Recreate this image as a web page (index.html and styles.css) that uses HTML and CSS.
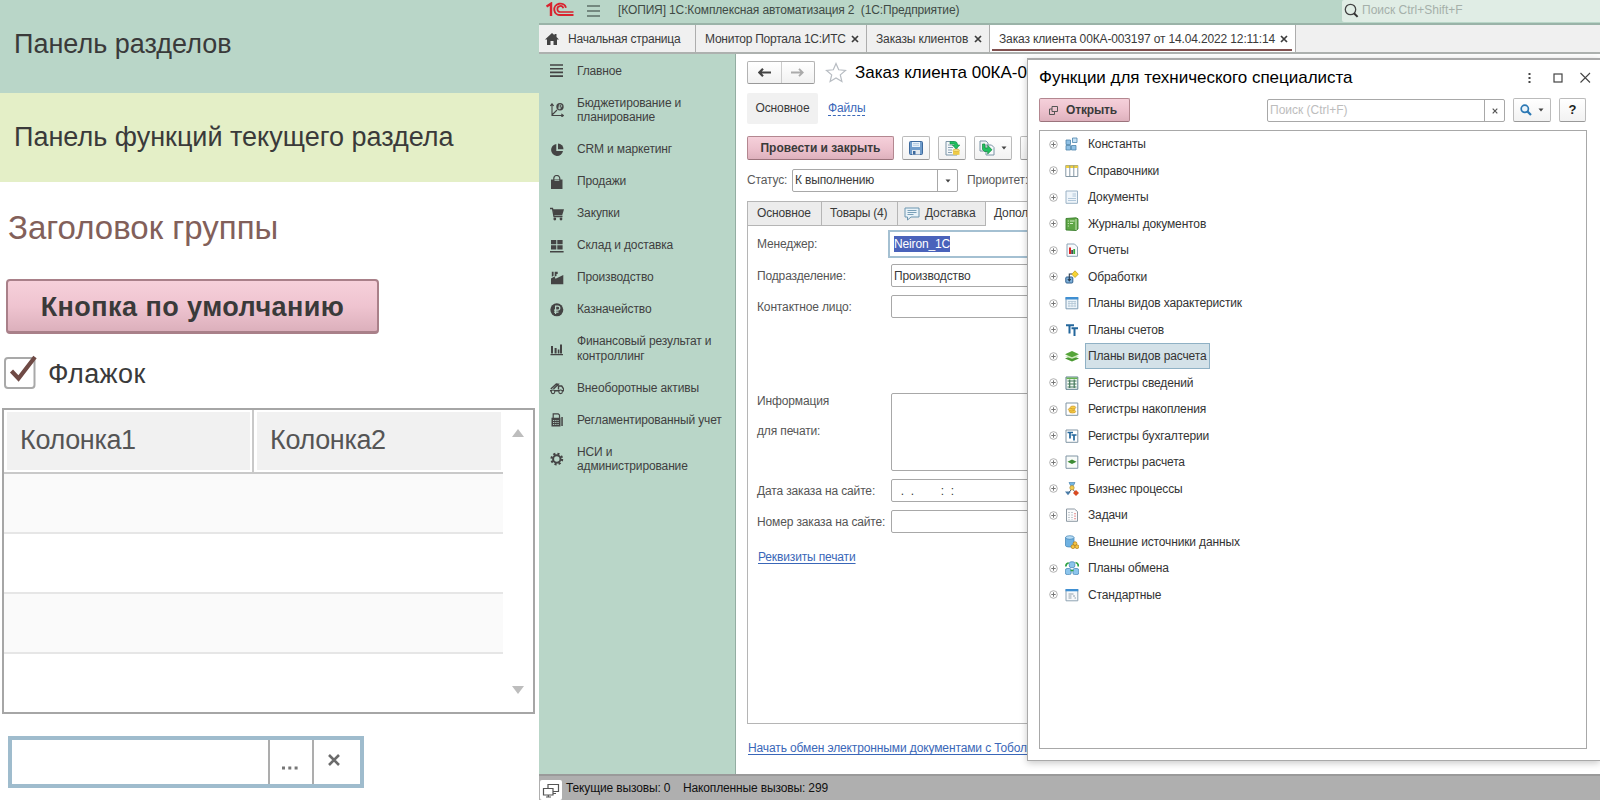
FILE: index.html
```html
<!DOCTYPE html>
<html lang="ru">
<head>
<meta charset="utf-8">
<title>1С:Комплексная автоматизация 2</title>
<link rel="stylesheet" href="styles.css">
</head>
<body>
<svg class="defs" width="0" height="0">
  <symbol id="plus" viewBox="0 0 9 9"><circle cx="4.5" cy="4.5" r="3.8" fill="#fff" stroke="#a9a9a9" stroke-width=".9"/><path d="M2.300 4.500h4.400M4.500 2.300v4.400" stroke="#777" stroke-width="1"/></symbol>
  <symbol id="cross" viewBox="0 0 8 8"><path d="M1 1l6 6M7 1l-6 6" stroke="#3c3c3c" stroke-width="1.7" fill="none"/></symbol>
  <symbol id="caret" viewBox="0 0 6 4"><path d="M.5.5h5L3 3.5z" fill="#444"/></symbol>
</svg>

<section class="samples">
  <div class="sample-sections"><span>Панель разделов</span></div>
  <div class="sample-functions"><span>Панель функций текущего раздела</span></div>
  <h2 class="sample-heading">Заголовок группы</h2>
  <button class="sample-button"><span>Кнопка по умолчанию</span></button>
  <label class="sample-check">
    <svg width="34" height="36" viewBox="0 0 34 36"><rect x="1" y="4" width="29.5" height="30" rx="3" fill="#fff" stroke="#a9a9a9" stroke-width="2"/><path d="M7.5 17l7 7.5L31 3" fill="none" stroke="#6f4a45" stroke-width="4.2"/></svg>
    <span>Флажок</span>
  </label>
  <div class="sample-table">
    <div class="st-grid">
      <div class="st-head"><div class="st-col st-first"><span>Колонка1</span></div><div class="st-col"><span>Колонка2</span></div></div>
      <div class="st-row odd"></div><div class="st-row"></div><div class="st-row odd"></div>
    </div>
    <div class="st-scroll"><i class="up"></i><i class="down"></i></div>
  </div>
  <div class="sample-input">
    <div class="si-text"></div>
    <div class="si-btn si-dots"><svg width="16" height="4" viewBox="0 0 16 4"><path d="M0 .5h3v3H0zM6.3.5h3v3h-3zM12.600.5h3v3h-3z" fill="#777"/></svg></div>
    <div class="si-btn si-clear"><svg width="12" height="12" viewBox="0 0 12 12"><path d="M1 1l10 10M11 1L1 11" stroke="#6b6b6b" stroke-width="2.6"/></svg></div>
  </div>
</section>

<section class="app">
  <header class="topbar">
    <svg class="logo" width="28" height="15" viewBox="0 0 28 15"><g fill="none" stroke="#d9232e"><path d="M.5 4.600L5 1.700V14" stroke-width="2.400"/><path d="M20 5.700A6 5.700 0 1 0 14.500 13H27.500" stroke-width="1.900"/><path d="M17.300 6.300A3 3 0 1 0 14.500 10H27.500" stroke-width="1.700"/></g></svg>
    <svg class="burger" width="13" height="12" viewBox="0 0 13 12"><path d="M0 1h13M0 6h13M0 11h13" stroke="#5d6f67" stroke-width="1.300"/></svg>
    <span class="app-title">[КОПИЯ] 1С:Комплексная автоматизация 2&nbsp; (1С:Предприятие)</span>
    <div class="search-all">
      <svg width="15" height="15" viewBox="0 0 15 15"><circle cx="6.500" cy="6.500" r="5.200" fill="none" stroke="#444" stroke-width="1.300"/><path d="M10 10.300l3.600 3.600" stroke="#333" stroke-width="2"/></svg>
      <span>Поиск Ctrl+Shift+F</span>
    </div>
  </header>

  <nav class="tabs">
    <div class="tab home"><svg width="14" height="12" viewBox="0 0 14 12"><path d="M7 0L0 6.500h2V12h3.500V8h3v4H12V6.500h2L11.500 4V1h-2v1.300z" fill="#444"/></svg><span>Начальная страница</span></div>
    <div class="tab t2"><span>Монитор Портала 1С:ИТС</span><svg width="8" height="8"><use href="#cross"/></svg></div>
    <div class="tab t3"><span>Заказы клиентов</span><svg width="8" height="8"><use href="#cross"/></svg></div>
    <div class="tab t4 active"><span>Заказ клиента 00КА-003197 от 14.04.2022 12:11:14</span><svg width="8" height="8"><use href="#cross"/></svg></div>
  </nav>

  <div class="middle">
    <ul class="sidebar">
      <li><svg viewBox="0 0 14 14"><path d="M0 1h13M0 4.700h13M0 8.400h13M0 12.100h13" stroke="#444" stroke-width="1.600"/></svg><span>Главное</span></li>
      <li><svg viewBox="0 0 14 14"><g stroke="#444" fill="none"><path d="M2 1v11.500h11M.3 3L2 .8 3.700 3M11.300 10.800l2 1.700-2 1.700M2 12l5-5" stroke-width="1.100"/></g><circle cx="10" cy="3.800" r="3.700" fill="#444"/><path d="M9.300 6.300V1.800h1.300a1.100 1.100 0 0 1 0 2.400H8.300M8.300 5.400h2.500" stroke="#b9d6c8" stroke-width=".8" fill="none"/></svg><span>Бюджетирование и<br>планирование</span></li>
      <li><svg viewBox="0 0 14 14"><path d="M6.300 1A6 6 0 1 0 13 8H6.300z" fill="#444"/><path d="M8 .5v5.800h5.500A5.800 5.800 0 0 0 8 .5z" fill="#444"/></svg><span>CRM и маркетинг</span></li>
      <li><svg viewBox="0 0 14 14"><path d="M1 4.500h11.500V14H1z" fill="#444"/><path d="M3.800 7V3.500a3 3 0 0 1 6 0V7" fill="none" stroke="#444" stroke-width="1.200"/><path d="M4.500 5.500h4.800" stroke="#b9d6c8" stroke-width=".7"/></svg><span>Продажи</span></li>
      <li><svg viewBox="0 0 14 14"><path d="M0 1.500h2.500l1.500 8h8.500" fill="none" stroke="#444" stroke-width="1.300"/><path d="M2.800 2.300H14l-1.800 6H4z" fill="#444"/><circle cx="4.800" cy="12" r="1.400" fill="#444"/><circle cx="11" cy="12" r="1.400" fill="#444"/></svg><span>Закупки</span></li>
      <li><svg viewBox="0 0 14 14"><path d="M1 1h5.300v4.300H1zM7.300 1h5.300v4.300H7.300zM1 6.300h5.300v4.300H1zM7.300 6.300h5.300v4.300H7.300zM0 12h13.600v1.600H0z" fill="#444"/></svg><span>Склад и доставка</span></li>
      <li><svg viewBox="0 0 14 14"><path d="M1 13.300V7.500l3.500-2 1 2.300L13.300 4v9.300zM1.800.8h1.800v4l-1.800 1zM4.700.8h3v2.200H6.500v2l-1.800.5z" fill="#444"/></svg><span>Производство</span></li>
      <li><svg viewBox="0 0 14 14"><circle cx="6.800" cy="6.800" r="6.500" fill="#444"/><path d="M5.600 11V3.200h2.200a1.900 1.900 0 0 1 0 4H4M4 9.100h4.500" stroke="#b9d6c8" stroke-width="1.200" fill="none"/></svg><span>Казначейство</span></li>
      <li><svg viewBox="0 0 14 14"><path d="M1 4h2v7.500H1zM4.600 6h2v5.500h-2zM7.800 7.500h1.600v4H7.800zM10 2.500h2v9h-2zM.5 12h12.500v1.300H.5z" fill="#444"/></svg><span>Финансовый результат и<br>контроллинг</span></li>
      <li><svg viewBox="0 0 14 14"><path d="M.8 8l5.500-5 2 .3L3.500 8M8.500 8.500V5h3.200l2 3v2.500M0 9.800h14" stroke="#444" stroke-width="1.400" fill="none"/><circle cx="3" cy="10.800" r="1.800" fill="#b9d6c8" stroke="#444" stroke-width="1.100"/><circle cx="10.600" cy="10.800" r="1.800" fill="#b9d6c8" stroke="#444" stroke-width="1.100"/></svg><span>Внеоборотные активы</span></li>
      <li><svg viewBox="0 0 14 14"><path d="M3.200 5V.8h5L9.500 2v3" fill="none" stroke="#444" stroke-width="1.200"/><path d="M1.500 4.800h9V13.500h-9zM11.300 4h1.500v9h-1.500z" fill="#444"/><path d="M3 7.500h6M3 9.500h6M3 11.500h6" stroke="#b9d6c8" stroke-width=".9" stroke-dasharray="1.300 .9"/></svg><span>Регламентированный учет</span></li>
      <li><svg viewBox="0 0 14 14"><circle cx="6.800" cy="7" r="5.300" fill="none" stroke="#444" stroke-width="2.200" stroke-dasharray="2.100 2.060"/><circle cx="6.800" cy="7" r="3.700" fill="none" stroke="#444" stroke-width="2"/></svg><span>НСИ и<br>администрирование</span></li>
    </ul>

    <main class="document">
      <div class="doc-head">
        <div class="navpair"><div><svg width="13" height="9" viewBox="0 0 13 9"><path d="M13 4.500H2M5 .8L1.300 4.500 5 8.200" fill="none" stroke="#444" stroke-width="2.200"/></svg></div><div><svg width="13" height="9" viewBox="0 0 13 9"><path d="M0 4.500h11M8 .8l3.700 3.700L8 8.200" fill="none" stroke="#aaa" stroke-width="1.800"/></svg></div></div>
        <svg class="star" width="22" height="21" viewBox="0 0 22 21"><path d="M11 1.500l2.700 6.300 6.800.6-5.200 4.500 1.600 6.600-5.900-3.500-5.900 3.500 1.600-6.600L1.500 8.400l6.800-.6z" fill="#fff" stroke="#b7bcc2" stroke-width="1.200"/></svg>
        <h1>Заказ клиента 00КА-0</h1>
      </div>
      <div class="doc-nav"><span class="current">Основное</span><a>Файлы</a></div>
      <div class="doc-tools">
        <button class="primary post">Провести и закрыть</button>
        <button class="tool b1"><svg width="14" height="14" viewBox="0 0 14 14"><rect x=".5" y=".5" width="13" height="13" rx="1" fill="#6f9ccb" stroke="#3d699c"/><path d="M3 1h8v5H3z" fill="#e9f2fa"/><path d="M4 2.500h6M4 4.300h6" stroke="#a9c3dc" stroke-width=".8"/><path d="M3 9h8v4.500H3z" fill="#e4e9ee"/><path d="M4 10h2.500v3.500H4z" fill="#3d699c"/></svg></button>
        <button class="tool b1"><svg width="15" height="16" viewBox="0 0 15 16"><path d="M1 1.500h8l3 3V15H1z" fill="#f4f7f9" stroke="#7b94a6"/><path d="M3 5h5M3 7.500h5M3 10h4M3 12.500h4" stroke="#8aa2b4"/><path d="M5 1.500h5q2.500.3 2.500 3.500h2.300L11 9 7.400 5h2.300V4H5z" fill="#20c060" stroke="#0e8a3e" stroke-width=".6"/><path d="M8 10.300h6.500v4.500H8z" fill="#efcb45"/><ellipse cx="11.200" cy="10.300" rx="3.200" ry="1.200" fill="#fbe684" stroke="#c39b26" stroke-width=".5"/></svg></button>
        <button class="tool b2"><svg width="16" height="16" viewBox="0 0 16 16"><path d="M1 1h6l2 2v8H1z" fill="#f1f4f6" stroke="#7b94a6"/><path d="M7 5h5.500L15 7.500V15H7z" fill="#f7f9fa" stroke="#7b94a6"/><path d="M3.500 4h2.500v4h2.700V5.300L13 9.800 8.700 14v-2.500H5.500L3.500 9.500z" fill="#20c060" stroke="#0e8a3e" stroke-width=".7"/></svg><svg width="6" height="4"><use href="#caret"/></svg></button>
        <button class="tool b1"></button>
      </div>
      <div class="doc-status">
        <span class="lbl">Статус:</span>
        <div class="combo"><span>К выполнению</span><i><svg width="6" height="4"><use href="#caret"/></svg></i></div>
        <span class="lbl prio">Приоритет:</span>
      </div>
      <div class="doc-tabs">
        <div class="dt w1">Основное</div><div class="dt w2">Товары (4)</div><div class="dt w3"><svg width="16" height="14" viewBox="0 0 16 14"><path d="M1 1h14v9H7l-3.500 3V10H1z" fill="#e8f2f8" stroke="#6d96b0"/><path d="M3.500 3.500h9M3.500 5.500h9M3.500 7.500h6" stroke="#6d96b0" stroke-width=".9"/></svg>Доставка</div><div class="dt on">Допол</div>
      </div>
      <div class="doc-form">
        <div class="row r1"><span>Менеджер:</span><div class="field focus"><mark>Neiron_1C</mark></div></div>
        <div class="row r2"><span>Подразделение:</span><div class="field">Производство</div></div>
        <div class="row r3"><span>Контактное лицо:</span><div class="field"></div></div>
        <div class="row r4"><span>Информация<br>для печати:</span><div class="field area"></div></div>
        <div class="row r5"><span>Дата заказа на сайте:</span><div class="field mask">&nbsp; .&nbsp; .&nbsp; &nbsp; &nbsp; &nbsp; :&nbsp; :</div></div>
        <div class="row r6"><span>Номер заказа на сайте:</span><div class="field"></div></div>
        <a class="props">Реквизиты печати</a>
      </div>
      <a class="edi">Начать обмен электронными документами с Тобол</a>
    </main>
  </div>

  <footer class="status">
    <div class="st-icon"><svg width="18" height="16" viewBox="0 0 18 16"><g fill="#fff" stroke="#555" stroke-width="1.200"><path d="M6 1.500h10.500v7H6zM10 10.500h4"/><path d="M1.500 5.500h9.500v6.500H1.500zM4 14h5M6.300 12v2"/></g></svg></div>
    <span class="s1">Текущие вызовы: 0</span><span class="s2">Накопленные вызовы: 299</span>
  </footer>

  <aside class="dialog">
    <div class="dlg-head">
      <h1>Функции для технического специалиста</h1>
      <svg width="64" height="12" viewBox="0 0 64 12"><path d="M1.500 1h2v2h-2zM1.500 5h2v2h-2zM1.500 9h2v2h-2z" fill="#444"/><rect x="27" y="2" width="8" height="8" fill="none" stroke="#444" stroke-width="1.200"/><path d="M53.500 1l9.500 9.500M63 1l-9.500 9.500" stroke="#444" stroke-width="1.100"/></svg>
    </div>
    <div class="dlg-tools">
      <button class="primary open"><svg width="9" height="9" viewBox="0 0 9 9"><path d="M3 .5h5.500v5H3zM3 3H.5v5.500h5V5.500" fill="none" stroke="#555" stroke-width="1"/></svg>Открыть</button>
      <div class="find"><span>Поиск (Ctrl+F)</span><i><svg width="6" height="6" viewBox="0 0 6 6"><path d="M.7.7l4.600 4.600M5.300.7L.7 5.300" stroke="#555" stroke-width="1.200"/></svg></i></div>
      <button class="tool lens"><svg width="12" height="12" viewBox="0 0 12 12"><circle cx="4.800" cy="4.800" r="3.600" fill="#eaf4fb" stroke="#2b78b4" stroke-width="1.700"/><path d="M7.400 7.400l3.600 3.600" stroke="#2b78b4" stroke-width="2.200"/></svg><svg width="6" height="4"><use href="#caret"/></svg></button>
      <button class="tool help">?</button>
    </div>
    <ul class="tree">
      <li><svg class="pl"><use href="#plus"/></svg><svg class="ic" viewBox="0 0 14 14"><g fill="#8fc0e4" stroke="#4d84ab" stroke-width=".8"><path d="M1 3h4.500v4.500H1zM1 8.500h4.500V13H1zM6.500 8.500H11V13H6.500z"/><path d="M7.500 1H12v4.500H7.500z" fill="#c6e2f5"/></g></svg><span>Константы</span></li>
      <li><svg class="pl"><use href="#plus"/></svg><svg class="ic" viewBox="0 0 14 14"><path d="M.8 1.500h12v11H.8z" fill="#fff" stroke="#8597a4"/><path d="M.8 1.500h12v2.500H.8z" fill="#f0cf3c"/><path d="M4.800 1.500v11M8.800 1.500v11" stroke="#8597a4"/></svg><span>Справочники</span></li>
      <li><svg class="pl"><use href="#plus"/></svg><svg class="ic" viewBox="0 0 14 14"><path d="M1 1h11.500v12.300H1z" fill="#eff5fa" stroke="#9bb2c5"/><path d="M7.500 4H11M7.500 6H11M3 8.500h8M3 10.500h8" stroke="#a9c2d6" stroke-width=".9"/></svg><span>Документы</span></li>
      <li><svg class="pl"><use href="#plus"/></svg><svg class="ic" viewBox="0 0 14 14"><path d="M1 1.500L11 .8l2 1V12l-2 1.500L1 13z" fill="#5ea646" stroke="#3a7e2c" stroke-width=".9"/><path d="M11 2v11" stroke="#c9e6b9" stroke-width="1"/><path d="M5 4h4.500M5 6.500h3M2.800 4h1M2.800 6.500h1M2.800 9h1" stroke="#d6efc9"/></svg><span>Журналы документов</span></li>
      <li><svg class="pl"><use href="#plus"/></svg><svg class="ic" viewBox="0 0 14 14"><path d="M2 1h7.500l3 3v9.300H2z" fill="#f7fafc" stroke="#8ea4b5"/><path d="M4 4.500h2V11H4z" fill="#e02525"/><path d="M6.300 7h1.600v4H6.300z" fill="#334"/><path d="M8.300 6h1.800v5H8.300z" fill="#36a83a"/></svg><span>Отчеты</span></li>
      <li><svg class="pl"><use href="#plus"/></svg><svg class="ic" viewBox="0 0 14 14"><rect x=".8" y="7" width="7" height="6" rx="1" fill="#7fb2dc" stroke="#305f8c"/><path d="M4.300 11V4h3M2.800 9l1.500 1.800L5.800 9" fill="none" stroke="#2a3d50" stroke-width="1.100"/><path d="M10 .8l3.300 3.400L10 7.500 6.800 4.200z" fill="#f7d432" stroke="#b79618" stroke-width=".7"/></svg><span>Обработки</span></li>
      <li><svg class="pl"><use href="#plus"/></svg><svg class="ic" viewBox="0 0 14 14"><path d="M1 1.500h11.800v11.300H1z" fill="#eef5fa" stroke="#7e9cb4"/><path d="M.5 1h12.800v2.500H.5z" fill="#3f8fd2"/><path d="M3 5.500h8M3 7.500h8M3 10h8M4 5v6M7 5v6M10 5v6" stroke="#b3c7d6" stroke-width=".8"/></svg><span>Планы видов характеристик</span></li>
      <li><svg class="pl"><use href="#plus"/></svg><svg class="ic" viewBox="0 0 14 14"><path d="M1 2.200h8M4.500 2v8.500M6.500 5.200h6.500M9.500 5V13" stroke="#24679c" stroke-width="2" fill="none"/></svg><span>Планы счетов</span></li>
      <li><svg class="pl"><use href="#plus"/></svg><svg class="ic" viewBox="0 0 14 14"><path d="M7 6.500l7 3-7 3-7-3z" fill="#4b9a33"/><path d="M7 4.500l7 2.700-7 2.600-7-2.600z" fill="#cfe9be"/><path d="M7 2l7 3.200-7 3-7-3z" fill="#55a539"/></svg><span class="picked">Планы видов расчета</span></li>
      <li><svg class="pl"><use href="#plus"/></svg><svg class="ic" viewBox="0 0 14 14"><path d="M1 1h11.800v12.300H1z" fill="#f5faf5" stroke="#5d7d8d"/><path d="M2.500 5h9M2.500 8h9M2.500 11h9M4.700 3.500v8.500M9.200 3.500v8.500" stroke="#45785d" stroke-width="1.200"/><path d="M1.500 1.500h11v1.600h-11z" fill="#66b350"/></svg><span>Регистры сведений</span></li>
      <li><svg class="pl"><use href="#plus"/></svg><svg class="ic" viewBox="0 0 14 14"><path d="M1 1h11.800v12.300H1z" fill="#fff" stroke="#8095a4"/><g fill="#f6cd47" stroke="#c38a19" stroke-width=".6"><ellipse cx="7.500" cy="9.500" rx="3.200" ry="1.500"/><ellipse cx="6.500" cy="7.500" rx="3.200" ry="1.500"/><ellipse cx="8" cy="5.500" rx="2.800" ry="1.500"/></g></svg><span>Регистры накопления</span></li>
      <li><svg class="pl"><use href="#plus"/></svg><svg class="ic" viewBox="0 0 14 14"><path d="M1 1h11.800v12.300H1z" fill="#fff" stroke="#8095a4"/><path d="M2.500 3.500h5.500M5 3.500v6M6.500 6h5M9 6v5.500" stroke="#24679c" stroke-width="1.700"/></svg><span>Регистры бухгалтерии</span></li>
      <li><svg class="pl"><use href="#plus"/></svg><svg class="ic" viewBox="0 0 14 14"><path d="M1 1h11.800v12.300H1z" fill="#f8fbf9" stroke="#8095a4"/><path d="M7 4.500l4.500 2.200L7 9 2.500 6.700z" fill="#3c8b33"/></svg><span>Регистры расчета</span></li>
      <li><svg class="pl"><use href="#plus"/></svg><svg class="ic" viewBox="0 0 14 14"><path d="M4 .5h6L8.500 3.500h-3z" fill="#73b4df" stroke="#3d7ba9" stroke-width=".6"/><path d="M7 7l-4 4M7.500 7l3 3.500" stroke="#666"/><circle cx="7" cy="5.800" r="2.200" fill="#f2cc50" stroke="#a8852a" stroke-width=".6"/><path d="M0 9.500h6l-3 3.700z" fill="#4a7ca8"/><path d="M11 8l3 3-3 3-3-3z" fill="#d94a22"/></svg><span>Бизнес процессы</span></li>
      <li><svg class="pl"><use href="#plus"/></svg><svg class="ic" viewBox="0 0 14 14"><path d="M1.500 1h8l3 2.500v9.800h-11z" fill="#fafbfc" stroke="#8d99a3"/><path d="M4 4v8M7 4v8" stroke="#8d99a3" stroke-dasharray="1 1.500"/><path d="M10 5v7" stroke="#d55" stroke-dasharray="1.300 1.200"/></svg><span>Задачи</span></li>
      <li><svg class="pl"></svg><svg class="ic" viewBox="0 0 14 14"><path d="M.5 2.500v8c0 2 8.500 2 8.500 0v-8z" fill="#6fb2e2" stroke="#3c80b3" stroke-width=".7"/><ellipse cx="4.800" cy="2.500" rx="4.200" ry="1.800" fill="#b7dcf4" stroke="#3c80b3" stroke-width=".7"/><g fill="#f5c542" stroke="#b17d17" stroke-width=".7"><circle cx="10" cy="8.600" r="1.900"/><circle cx="8" cy="11.700" r="1.900"/><circle cx="12" cy="11.700" r="1.900"/></g></svg><span>Внешние источники данных</span></li>
      <li><svg class="pl"><use href="#plus"/></svg><svg class="ic" viewBox="0 0 14 14"><g fill="#8cc5ec" stroke="#3c80b3" stroke-width=".7"><rect x="4.300" y=".8" width="5.500" height="5.800" rx="1.700"/><rect x=".4" y="7.500" width="5.800" height="6.100" rx="1.700"/><rect x="7.900" y="7.500" width="5.800" height="6.100" rx="1.700"/></g><path d="M.8 5.500Q1 2 3.800 2M10.500 1.500q3 .5 2.800 4M5.500 9.500h3" fill="none" stroke="#2ea345" stroke-width="1.700"/></svg><span>Планы обмена</span></li>
      <li><svg class="pl"><use href="#plus"/></svg><svg class="ic" viewBox="0 0 14 14"><path d="M1 1.500h11.800v11.300H1z" fill="#f7f9fb" stroke="#8fa3b3"/><path d="M.5 1h12.800v2.300H.5z" fill="#3f8fd2"/><path d="M3.500 6h5M3.500 8h3M3.500 10h3M8 8h2M9.500 10h1.500" stroke="#90a0ac"/></svg><span>Стандартные</span></li>
    </ul>
  </aside>
</section>
</body>
</html>
```
FILE: styles.css
```css
* { box-sizing: border-box; }
body {
  margin: 0;
  width: 1600px;
  height: 800px;
  overflow: hidden;
  display: flex;
  background: #fff;
  color: #3a3a3a;
  font: 12px/14px "Liberation Sans", Arial, sans-serif;
}
h1, h2, ul { margin: 0; padding: 0; font-weight: normal; }
li { list-style: none; }
svg { display: block; flex: none; }
span { white-space: nowrap; }
.defs { position: absolute; }
button { font: inherit; color: inherit; padding: 0; margin: 0; letter-spacing: inherit; }

/* style samples */
.samples { width: 539px; flex: none; display: flex; flex-direction: column; font-size: 27px; line-height: 32px; }
.sample-sections { height: 93px; background: #b9d6c8; padding: 28px 0 0 14px; }
.sample-functions { height: 89px; background: #e4efc7; padding: 28px 0 0 14px; }
.sample-heading { font-size: 33px; line-height: 38px; height: 97px; padding: 27px 0 0 8px; color: #82605a; }
.sample-button {
  width: 373px; height: 55px; margin-left: 6px; padding-top: 2px;
  border: 2px solid #a98089; border-bottom-width: 3px; border-radius: 4px;
  background: linear-gradient(#f6d0da, #efc4d0 50%, #dcb0bc);
  font-weight: bold; color: #3a3a3a; letter-spacing: .45px;
}
.sample-check { display: flex; align-items: flex-start; gap: 10px; margin: 20px 0 0 4px; height: 54px; letter-spacing: .4px; }
.sample-check span { padding-top: 4px; }
.sample-table { margin-left: 2px; width: 533px; height: 306px; border: 2px solid #a6a6a6; display: flex; }
.st-grid { width: 499px; }
.st-head { height: 64px; display: flex; border-bottom: 2px solid #c9c9c9; }
.st-col { flex: 1; padding: 2px 2px 2px 3px; color: #555; letter-spacing: -.35px; }
.st-first { flex: none; width: 250px; border-right: 2px solid #c9c9c9; }
.st-col span { display: block; height: 58px; background: #f1f1f1; padding: 12px 0 0 13px; }
.st-row { height: 60px; border-bottom: 2px solid #e6e6e6; }
.st-row.odd { background: #fafafa; }
.st-scroll { flex: 1; display: flex; flex-direction: column; justify-content: space-between; align-items: center; padding: 19px 0 18px; }
.up, .down { width: 0; height: 0; border: 6px solid transparent; }
.up { border-top: 0; border-bottom: 8px solid #bdbdbd; }
.down { border-bottom: 0; border-top: 8px solid #bdbdbd; }
.sample-input { margin: 22px 0 0 8px; width: 356px; height: 52px; border: 4px solid #9fbccd; display: flex; }
.si-text { width: 256px; }
.si-btn { border-left: 2px solid #adadad; }
.si-dots { width: 44px; padding: 26px 0 0 12px; }
.si-clear { padding: 14px 0 0 14px; }

/* application window */
.app { position: relative; width: 1061px; flex: none; display: flex; flex-direction: column; letter-spacing: -.14px; }
.topbar { height: 25px; background: #b9d6c8; border-bottom: 2px solid #9ab3a8; display: flex; align-items: flex-start; }
.logo { margin: 2px 0 0 7px; }
.burger { margin: 5px 0 0 13px; }
.app-title { margin: 3px 0 0 18px; color: #3f4a45; letter-spacing: -.13px; }
.search-all { margin-left: auto; width: 258px; height: 22px; background: #e0ede5; display: flex; padding: 3px 0 0 2px; gap: 3px; color: #a5b0aa; border-radius: 2px 0 0 2px; letter-spacing: 0; }
.tabs { height: 29px; background: #f0f0f0; border-bottom: 2px solid #adb1af; display: flex; }
.tab { display: flex; align-items: center; border-right: 1px solid #adadad; height: 27px; }
.home { width: 157px; padding-left: 6px; gap: 9px; letter-spacing: -.2px; }
.t2 { width: 171px; padding-left: 9px; letter-spacing: -.25px; }
.t3 { width: 123px; padding-left: 9px; }
.t4 { width: 306px; padding-left: 9px; }
.t2 svg, .t3 svg, .t4 svg { margin-left: auto; margin-right: 7px; }
.active { background: #fff; position: relative; }
.active::after { content: ""; position: absolute; left: 2px; right: 3px; bottom: 1px; height: 2px; background: #80504f; }

.middle { height: 720px; display: flex; }
.sidebar { width: 197px; background: #b9d6c8; border-right: 1px solid #93ada2; padding-top: 1px; line-height: 14.5px; flex: none; }
.sidebar li { display: flex; align-items: center; gap: 13px; padding: 8.75px 0 8.75px 11px; color: #404040; }
.sidebar svg { width: 14px; height: 14px; }

.document { flex: 1; padding: 7px 0 0 11px; overflow: hidden; }
.doc-head { display: flex; height: 32px; }
.navpair { width: 68px; height: 23px; display: flex; border: 1px solid #b3b3b3; border-bottom-color: #999; border-radius: 2px; background: linear-gradient(#fff, #f1f1f1); }
.navpair div { flex: 1; display: flex; align-items: center; justify-content: center; }
.navpair div + div { border-left: 1px solid #ccc; }
.star { margin: 1px 0 0 10px; }
h1 { font-size: 17px; line-height: 20px; color: #000; white-space: nowrap; letter-spacing: -.02px; }
.doc-head h1 { margin: 2px 0 0 8px; }
.doc-nav { display: flex; align-items: center; height: 31px; }
.current { background: #f1f1f1; width: 71px; line-height: 31px; height: 31px; text-align: center; border-radius: 2px; }
a { color: #3a67b8; white-space: nowrap; }
.doc-nav a { margin: 1px 0 0 10px; border-bottom: 1px dashed #3a67b8; line-height: 13px; }
.doc-tools { display: flex; margin-top: 12px; height: 33px; }
.primary {
  border: 1px solid #b38790; border-bottom-color: #9b737c; border-radius: 2px;
  background: linear-gradient(#f5d0da, #ecc1cd 55%, #deb1bd); font-weight: bold; height: 24px;
}
.post { width: 147px; margin-right: 8px; letter-spacing: -.02px; }
.tool { height: 24px; border: 1px solid #bbb; border-bottom-color: #999; border-radius: 2px; background: linear-gradient(#fff, #f2f2f2); display: flex; align-items: center; justify-content: center; }
.b1 { width: 28px; margin-right: 8px; }
.b2 { width: 38px; margin-right: 8px; gap: 6px; }
.doc-status { display: flex; height: 32px; }
.lbl { line-height: 23px; color: #5a5a5a; }
.combo { margin-left: 5px; width: 166px; height: 23px; border: 1px solid #a8a8a8; border-radius: 2px; display: flex; justify-content: space-between; line-height: 21px; padding-left: 2px; }
.combo i { width: 20px; border-left: 1px solid #a8a8a8; display: flex; align-items: center; justify-content: center; }
.prio { margin-left: 9px; }
.lbl:first-child { width: 40px; }
.doc-tabs { display: flex; height: 25px; border-bottom: 1px solid #b5b5b5; }
.dt { height: 25px; border: 1px solid #b5b5b5; border-left-width: 0; background: #ececec; line-height: 23px; display: flex; align-items: center; padding-left: 9px; }
.w1 { width: 75px; border-left-width: 1px; }
.w2 { width: 76px; padding-left: 8px; letter-spacing: -.2px; }
.w3 { width: 88px; gap: 5px; padding-left: 6px; }
.on { background: #fff; border-bottom-color: #fff; width: 200px; padding-left: 8px; }
.doc-form { height: 498px; border: 1px solid #b5b5b5; border-top: 0; border-right: 0; padding: 4px 0 0 9px; }
.row { display: flex; color: #555; height: 31px; }
.row > span { width: 134px; line-height: 25px; flex: none; }
.field { flex: 1; height: 23px; border: 1px solid #a8a8a8; border-radius: 2px; padding-left: 2px; line-height: 22px; color: #3a3a3a; }
.r1 { height: 34px; }
.r1 > span { line-height: 29px; width: 131px; }
.focus { height: 28px; border: 2px solid #a4c0d2; border-radius: 0; line-height: 24px; padding-left: 4px; }
mark { background: #4a63bb; color: #fff; padding: 1px 0; }
.r3 { height: 98px; }
.r4 { height: 86px; }
.r4 > span { line-height: 29.5px; padding-top: 1px; margin-top: -7px; }
.area { height: 78px; }
.mask { white-space: pre; letter-spacing: 0; }
.props { display: inline-block; margin: 9px 0 0 1px; text-decoration: underline; text-underline-offset: 2px; }
.edi { display: block; margin: 17px 0 0 1px; text-decoration: underline; text-underline-offset: 2px; letter-spacing: -.12px; }

.status { height: 26px; background: #afafaf; border-top: 2px solid #9a9a9a; display: flex; color: #111; }
.st-icon { width: 22px; height: 20px; margin: 4px 0 0 1px; background: #fff; border-radius: 2px; padding: 3px 0 0 2px; }
.s1 { margin: 5px 0 0 4px; width: 117px; }
.s2 { margin-top: 5px; }

/* dialog lying over the document */
.dialog { position: absolute; left: 488px; top: 58px; width: 573px; height: 703px; background: #fff; border: 1px solid #a9a9a9; border-top-width: 2px; border-right: 0; box-shadow: 0 2px 7px rgba(0,0,0,.22); padding: 8px 13px 0 11px; }
.dlg-head { display: flex; justify-content: space-between; height: 30px; }
.dlg-head svg { margin: 4px -4px 0 0; }
.dlg-tools { display: flex; height: 32px; }
.open { width: 91px; display: flex; align-items: center; padding-left: 9px; gap: 8px; }
.find { margin: 1px 8px 0 137px; width: 238px; height: 23px; border: 1px solid #a8a8a8; border-radius: 2px; display: flex; justify-content: space-between; line-height: 21px; padding-left: 2px; color: #bdbdbd; letter-spacing: 0; }
.find i { width: 20px; border-left: 1px solid #a8a8a8; display: flex; align-items: center; justify-content: center; }
.lens { width: 38px; gap: 6px; margin-right: 8px; }
.help { width: 27px; font-weight: bold; font-size: 13px; color: #222; }
.tree { height: 619px; width: 548px; border: 1px solid #a8a8a8; }
.tree li { display: flex; align-items: center; height: 26.5px; padding-left: 9px; color: #333; }
.pl { width: 9px; height: 9px; }
.ic { width: 14px; height: 14px; margin: 0 7px 0 7px; }
.tree span { height: 26px; line-height: 24px; padding: 0 3px 0 2px; border: 1px solid transparent; margin-left: -1px; }
.tree .picked { background: #d3e1e8; border: 1px solid #8fb1c5; }
```
